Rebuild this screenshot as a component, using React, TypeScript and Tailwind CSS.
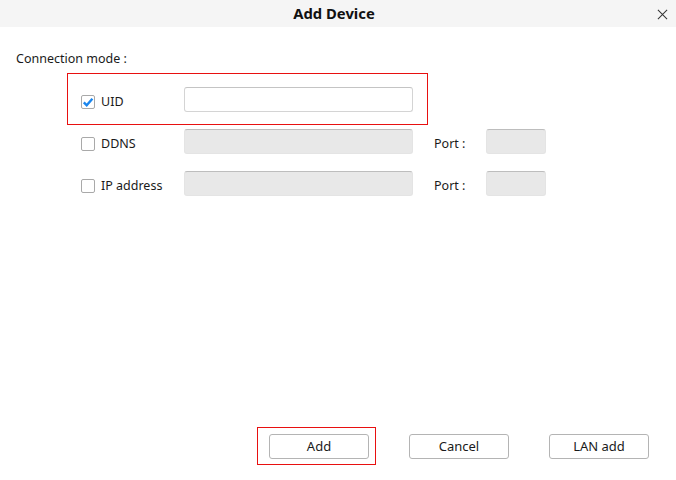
import { useState } from "react";

type Mode = "uid" | "ddns" | "ip";

function Check({ checked, onClick }: { checked: boolean; onClick: () => void }) {
  return (
    <button
      onClick={onClick}
      className="flex h-[14px] w-[14px] shrink-0 items-center justify-center rounded-[2px] border border-[#a9a9a9] bg-white"
    >
      {checked && (
        <svg viewBox="0 0 12 12" className="h-[12px] w-[12px]">
          <path d="M1.8 6.4 4.7 9.3 10.4 2.8" fill="none" stroke="#1a86ee" strokeWidth="2.4" />
        </svg>
      )}
    </button>
  );
}

function Field({ enabled, className }: { enabled: boolean; className: string }) {
  return enabled ? (
    <input className={`h-[25px] rounded-[3px] border border-[#d4d4d4] border-t-[#c4c4c4] bg-white px-1 text-[12px] outline-none ${className}`} />
  ) : (
    <input
      disabled
      className={`h-[25px] rounded-[3px] border border-[#e4e4e4] border-t-[#bdbdbd] bg-[#e8e8e8] px-1 text-[12px] ${className}`}
    />
  );
}

function Row({ label, mode, current, setMode, port }: { label: string; mode: Mode; current: Mode; setMode: (m: Mode) => void; port: boolean }) {
  const on = current === mode;
  return (
    <div className="flex h-[25px] items-center">
      <div className="mt-[5px] flex w-[103px] items-center gap-[6px]">
        <Check checked={on} onClick={() => setMode(mode)} />
        <span>{label}</span>
      </div>
      <Field enabled={on} className="w-[229px]" />
      {port && (
        <>
          <span className="mt-[5px] ml-[21px] w-[52px]">Port :</span>
          <Field enabled={on} className="w-[60px]" />
        </>
      )}
    </div>
  );
}

export default function App() {
  const [mode, setMode] = useState<Mode>("uid");

  return (
    <div className="flex h-[480px] w-[676px] flex-col bg-white text-[12.5px] text-[#1a1a1a] [font-family:'Noto_Sans',sans-serif]">
      <div className="relative flex h-[27px] shrink-0 items-center justify-center bg-[#f5f5f5]">
        <span className="-ml-[8px] text-[14.8px] font-bold text-[#111]">Add Device</span>
        <button className="absolute top-[8px] right-[8px] flex h-[12px] w-[12px] items-center justify-center">
          <svg viewBox="0 0 12 12" className="h-[11px] w-[11px]">
            <path d="M1 1 11 11M11 1 1 11" stroke="#333" strokeWidth="1.1" />
          </svg>
        </button>
      </div>

      <div className="pl-[16px] pt-[23px] leading-[18px]">Connection mode :</div>

      <div className="mt-[5px] ml-[67px] w-[361px] border border-[#e81010] px-[13px] pt-[13px] pb-[12px]">
        <Row label="UID" mode="uid" current={mode} setMode={setMode} port={false} />
      </div>

      <div className="mt-[4px] ml-[81px] flex flex-col gap-[17px]">
        <Row label="DDNS" mode="ddns" current={mode} setMode={setMode} port />
        <Row label="IP address" mode="ip" current={mode} setMode={setMode} port />
      </div>

      <div className="mt-auto flex items-center justify-end gap-[40px] pr-[27px] pb-[15px]">
        <div className="-mr-[7px] border border-[#e81010] pt-[6px] pr-[6px] pb-[5px] pl-[11px]">
          <button className="h-[25px] w-[100px] rounded-[3px] border border-[#b4b4b4] bg-white pt-[1px] text-[13px]">Add</button>
        </div>
        <button className="h-[25px] w-[100px] rounded-[3px] border border-[#b4b4b4] bg-white pt-[1px] text-[13px]">Cancel</button>
        <button className="h-[25px] w-[100px] rounded-[3px] border border-[#b4b4b4] bg-white pt-[1px] text-[13px]">LAN add</button>
      </div>
    </div>
  );
}
